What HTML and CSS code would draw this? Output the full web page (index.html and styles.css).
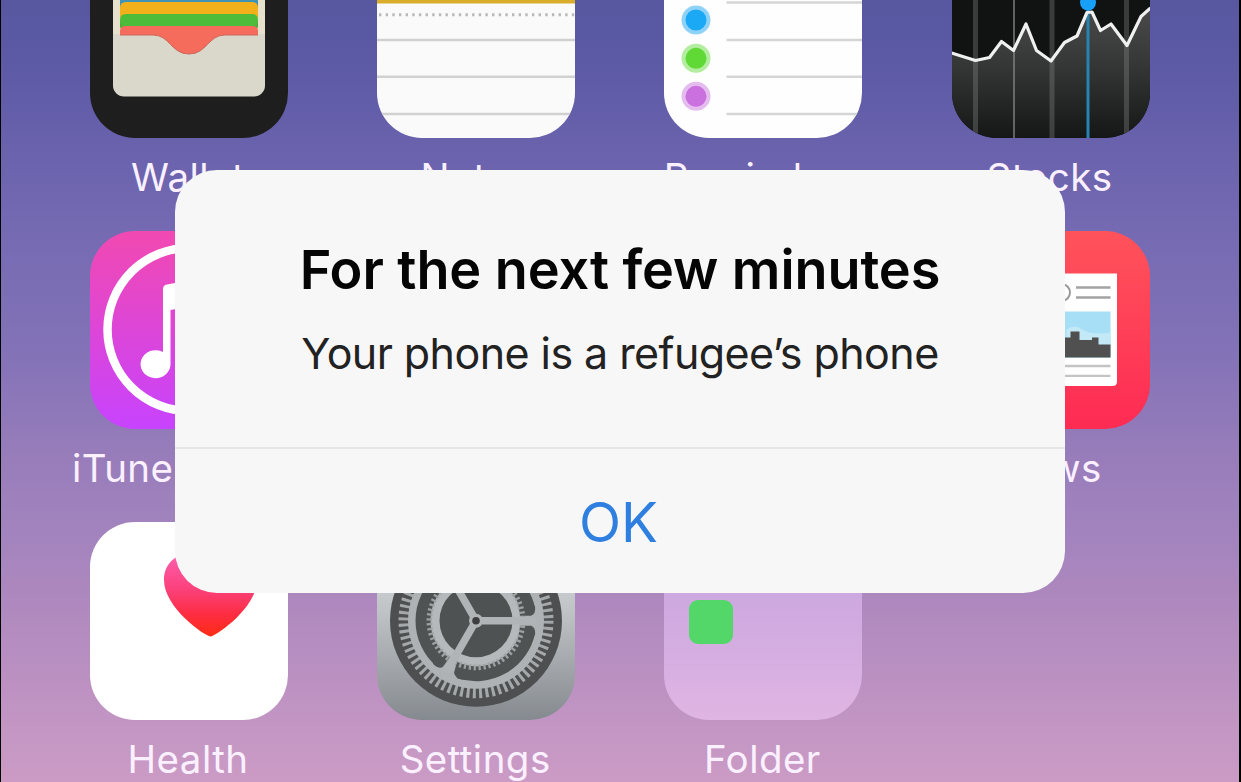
FILE: index.html
```html
<!DOCTYPE html>
<html lang="en">
<head>
<meta charset="utf-8">
<title>Home screen</title>
<link rel="stylesheet" href="styles.css">
</head>
<body>
<main class="screen">
  <div class="apps">
    <div class="app">
      <svg class="icon" viewBox="90 -60 198 198">
        <rect x="90" y="-60" width="198" height="198" fill="#1e1e1e"/>
        <rect x="113" y="-38" width="152" height="134.500" rx="11" fill="#dad8cb"/>
        <rect x="113" y="-26" width="152" height="60" fill="#e6e1cc"/>
        <rect x="120" y="-22" width="138" height="40" fill="#3f93b5"/>
        <path d="M120 14V8q0-6 6-6h126q6 0 6 6v10H120z" fill="#f2b01b"/>
        <path d="M120 28v-8q0-6 6-6h126q6 0 6 6v8H120z" fill="#4cbc3a"/>
        <path d="M120 26h138v-4q0 4-5 4H125q-5 0-5-4z" fill="#5e9a3a"/>
        <path d="M120 35v-4q0-5 6-5h126q6 0 6 5v4h-33c-17 0-18 19-36 19s-19-19-36-19z" fill="#f56b5c"/>
        <path d="M120 35h33c17 0 18 19 36 19s19-19 36-19h33" fill="none" stroke="#c9685b" stroke-width="1"/>
      </svg>
      <span class="label label-wallet">Wallet</span>
    </div>
    <div class="app">
      <svg class="icon" viewBox="377 -60 198 198">
        <rect x="377" y="-60" width="198" height="198" fill="#fafafa"/>
        <rect x="377" y="-60" width="198" height="63.500" fill="#d9ad2b"/>
        <path d="M379 14.800h196" stroke="#b9b9bd" stroke-width="3" stroke-dasharray="2.400 4.250"/>
        <path d="M377 40h198M377 76.700h198M377 114h198" stroke="#d0d1d0" stroke-width="2.400"/>
      </svg>
      <span class="label">Notes</span>
    </div>
    <div class="app">
      <svg class="icon" viewBox="664.500 -60 198 198">
        <rect x="664" y="-60" width="199" height="198" fill="#fefefe"/>
        <path d="M727 2.500h136M727 40h136M727 76.700h136M727 114h136" stroke="#d5d5d5" stroke-width="2.400"/>
        <circle cx="696.500" cy="20" r="14.500" fill="#8fd2f8"/><circle cx="696.500" cy="20" r="10.500" fill="#1ba9f5"/>
        <circle cx="696.500" cy="58.300" r="14.500" fill="#b3eda0"/><circle cx="696.500" cy="58.300" r="10.500" fill="#60d937"/>
        <circle cx="696.500" cy="96.300" r="14.500" fill="#e5bcee"/><circle cx="696.500" cy="96.300" r="10.500" fill="#cb70df"/>
      </svg>
      <span class="label">Reminders</span>
    </div>
    <div class="app">
      <svg class="icon" viewBox="951.500 -60 198 198">
        <defs>
          <linearGradient id="stocks-fill" x1="0" y1="10" x2="0" y2="138" gradientUnits="userSpaceOnUse">
            <stop offset="0" stop-color="#4a4a4a"/><stop offset=".45" stop-color="#343535"/><stop offset="1" stop-color="#151616"/>
          </linearGradient>
        </defs>
        <rect x="951" y="-60" width="199" height="198" fill="#111212"/>
        <path d="M951 53L975 60.500 989 57.500 1001 41.500 1013 50.500 1025.500 24 1036 50.500 1050.500 61 1064 42.500 1076.500 36 1086.500 12.500 1091.500 12 1100 30.500 1110.500 24 1126.500 45.500 1140.500 16.500 1150 8V138H951z" fill="url(#stocks-fill)"/>
        <path d="M975-60v198M1051.500-60v198M1126-60v198" stroke="#868686" stroke-opacity=".36" stroke-width="5"/>
        <path d="M1013.500-60v198" stroke="#8a8a8a" stroke-opacity=".65" stroke-width="2"/>
        <path d="M1087.500 2v136" stroke="#2684b4" stroke-width="3"/>
        <path d="M951 53L975 60.500 989 57.500 1001 41.500 1013 50.500 1025.500 24 1036 50.500 1050.500 61 1064 42.500 1076.500 36 1086.500 12.500 1091.500 12 1100 30.500 1110.500 24 1126.500 45.500 1140.500 16.500 1150 8" fill="none" stroke="#f0f0f0" stroke-width="3.200" stroke-linejoin="round"/>
        <circle cx="1087.500" cy="2.500" r="8" fill="#16a0f8"/>
      </svg>
      <span class="label">Stocks</span>
    </div>

    <div class="app">
      <svg class="icon" viewBox="0 0 198 198">
        <defs>
          <linearGradient id="itunes-fill" x1="0" y1="0" x2="0" y2="1">
            <stop offset="0" stop-color="#f249b1"/><stop offset="1" stop-color="#c743fe"/>
          </linearGradient>
        </defs>
        <rect width="198" height="198" fill="url(#itunes-fill)"/>
        <circle cx="99" cy="98.500" r="81.500" fill="none" stroke="#fff" stroke-width="8.500"/>
        <path d="M73 58q0-4 4-4.500l59-11v79a14 13 0 1 1-7-11V70L80.500 79v53a15 14 0 1 1-7.500-11z" fill="#fff"/>
      </svg>
      <span class="label">iTunes Store</span>
    </div>
    <div class="app"></div>
    <div class="app"></div>
    <div class="app">
      <svg class="icon" viewBox="951.500 231.500 198 198">
        <defs>
          <linearGradient id="news-fill" x1="0" y1="0" x2="0" y2="1">
            <stop offset="0" stop-color="#ff535b"/><stop offset="1" stop-color="#fe2b53"/>
          </linearGradient>
        </defs>
        <rect x="951" y="231" width="199" height="199" fill="url(#news-fill)"/>
        <path d="M984 274h132.500v108q0 4.500-4.500 4.500H984z" fill="#fff"/>
        <circle cx="1061" cy="293" r="8.500" fill="none" stroke="#999" stroke-width="2"/>
        <path d="M1075.500 288h34.500M1075.500 298h34.500" stroke="#a3a3a3" stroke-width="2.300"/>
        <rect x="991" y="312" width="119" height="46" fill="#a6dff6"/>
        <path d="M1066 330q8-6 16 0t28 3v25h-44z" fill="#c3e9f7"/>
        <path d="M991 358v-20h79v-6h9v8.500h12.500V338h6.500v7h12v13z" fill="#505050"/>
        <path d="M991 366.500h119M991 376.300h119" stroke="#c4c4c4" stroke-width="2.300"/>
      </svg>
      <span class="label">News</span>
    </div>

    <div class="app">
      <svg class="icon" viewBox="90 522 198 198">
        <defs>
          <linearGradient id="heart-fill" x1="0" y1="550" x2="0" y2="636" gradientUnits="userSpaceOnUse">
            <stop offset="0" stop-color="#ff62b4"/><stop offset=".45" stop-color="#fb417c"/><stop offset=".75" stop-color="#fd2d41"/><stop offset="1" stop-color="#ff2b16"/>
          </linearGradient>
        </defs>
        <rect x="90" y="522" width="198" height="198" fill="#fff"/>
        <path d="M210.500 636.500C205 636 164 608 164 580C164 552 199 545 210.500 565C222 545 257 552 257 580C257 608 216 636 210.500 636.500z" fill="url(#heart-fill)"/>
      </svg>
      <span class="label">Health</span>
    </div>
    <div class="app">
      <svg class="icon" viewBox="377 522 198 198">
        <defs>
          <linearGradient id="settings-fill" x1="0" y1="0" x2="0" y2="1">
            <stop offset="0" stop-color="#e2e4e8"/><stop offset=".45" stop-color="#c0c3c5"/><stop offset="1" stop-color="#858a90"/>
          </linearGradient>
        </defs>
        <rect x="377" y="522" width="198" height="198" fill="url(#settings-fill)"/>
        <g transform="translate(476 620.700)" fill="none">
          <circle r="86" fill="#4d4f50"/>
          <circle r="72" stroke="#a4a8aa" stroke-width="11" stroke-dasharray="3 3.283"/>
          <circle r="68" fill="#aeb2b4"/>
          <g stroke="#505354" stroke-width="15">
            <path id="gear-arc" d="M51.800 11A53 53 0 0 1-16.500 50.400" stroke="#505354"/>
            <use href="#gear-arc" transform="rotate(120)"/>
            <use href="#gear-arc" transform="rotate(240)"/>
          </g>
          <g fill="#505354">
            <path d="M44 5h11q5 2 4 9l-7 9-10-4zM-25-41l-6-9q-1-5-8-5l-5 10 8 9zM-19 41l-3 11q1 6 9 7l7-12z"/>
            <path d="M44-5h11q5-2 4-9l-7-9-10 4z"/>
            <path d="M-26 36l-7 10q-4 3-10-3l1-12z"/>
          </g>
          <circle r="46" stroke="#9ea2a4" stroke-width="7" stroke-dasharray="2.200 2.617"/>
          <circle r="40" stroke="#b5b9bb" stroke-width="8"/>
          <circle r="36.500" fill="#4f5253"/>
          <path d="M0 0H60M0 0L-30-52M0 0L-30 52" stroke="#b0b4b6" stroke-width="7.500"/>
          <circle r="7" fill="#b0b4b6"/>
          <circle r="3.800" fill="#3c3e3f"/>
        </g>
      </svg>
      <span class="label">Settings</span>
    </div>
    <div class="app">
      <div class="icon folder"><span class="folder-item"></span></div>
      <span class="label">Folder</span>
    </div>
  </div>

  <section class="alert" role="alertdialog">
    <div class="alert-body">
      <h1 class="alert-title">For the next few minutes</h1>
      <p class="alert-message">Your phone is a refugee’s phone</p>
    </div>
    <button class="alert-button">OK</button>
  </section>
</main>
</body>
</html>
```

FILE: styles.css
```css
* { box-sizing: border-box; }

body {
  margin: 0;
  background: #000;
  font-family: Inter, "Liberation Sans", sans-serif;
}

.screen {
  position: relative;
  height: 782px;
  margin: 0 2px 0 1px;
  overflow: hidden;
  background: linear-gradient(#5757a0 0, #5d5aa6 70px, #6a62ad 150px, #766bb3 240px, #8372b7 350px, #987dba 460px, #a283be 530px, #ae88be 600px, #bd92c2 690px, #cb9bc5 782px);
}

.apps {
  display: grid;
  grid-template-columns: repeat(4, 198px);
  grid-auto-rows: 291px;
  column-gap: 89.200px;
  margin: -60px 0 0 89px;
}

.app {
  display: flex;
  flex-direction: column;
  align-items: center;
}

.icon {
  display: block;
  flex: none;
  width: 198px;
  height: 198px;
  border-radius: 45px;
  overflow: hidden;
}

.label {
  margin: 16px 2px 0 0;
  color: #faf0ff;
  font-size: 38.500px;
  letter-spacing: 0.450px;
  line-height: 46px;
  white-space: nowrap;
}

.folder {
  padding: 78px 25px;
  background: linear-gradient(#c7a3dd, #cfa9e0 45%, #dfb5e2);
}

.folder-item {
  display: block;
  width: 44px;
  height: 44px;
  border-radius: 9px;
  background: #53d769;
}

.alert {
  position: absolute;
  top: 170px;
  left: 174px;
  display: flex;
  flex-direction: column;
  width: 890px;
  height: 422.500px;
  border-radius: 42px;
  overflow: hidden;
  background: #f7f7f7;
  text-align: center;
}

.alert-body {
  height: 279px;
  padding-top: 67px;
  border-bottom: 2px solid #e7e7e7;
}

.alert-title {
  margin: 0;
  color: #050505;
  font-size: 54px;
  font-weight: 600;
  letter-spacing: -0.080px;
  line-height: 66px;
}

.alert-message {
  margin: 23px 0 0;
  color: #222;
  font-size: 43px;
  letter-spacing: -0.570px;
  line-height: 54px;
}

.alert-button {
  flex: 1;
  padding: 2px 3px 0 0;
  border: 0;
  background: none;
  color: #2f7fe0;
  font-family: inherit;
  font-size: 55px;
}
```
